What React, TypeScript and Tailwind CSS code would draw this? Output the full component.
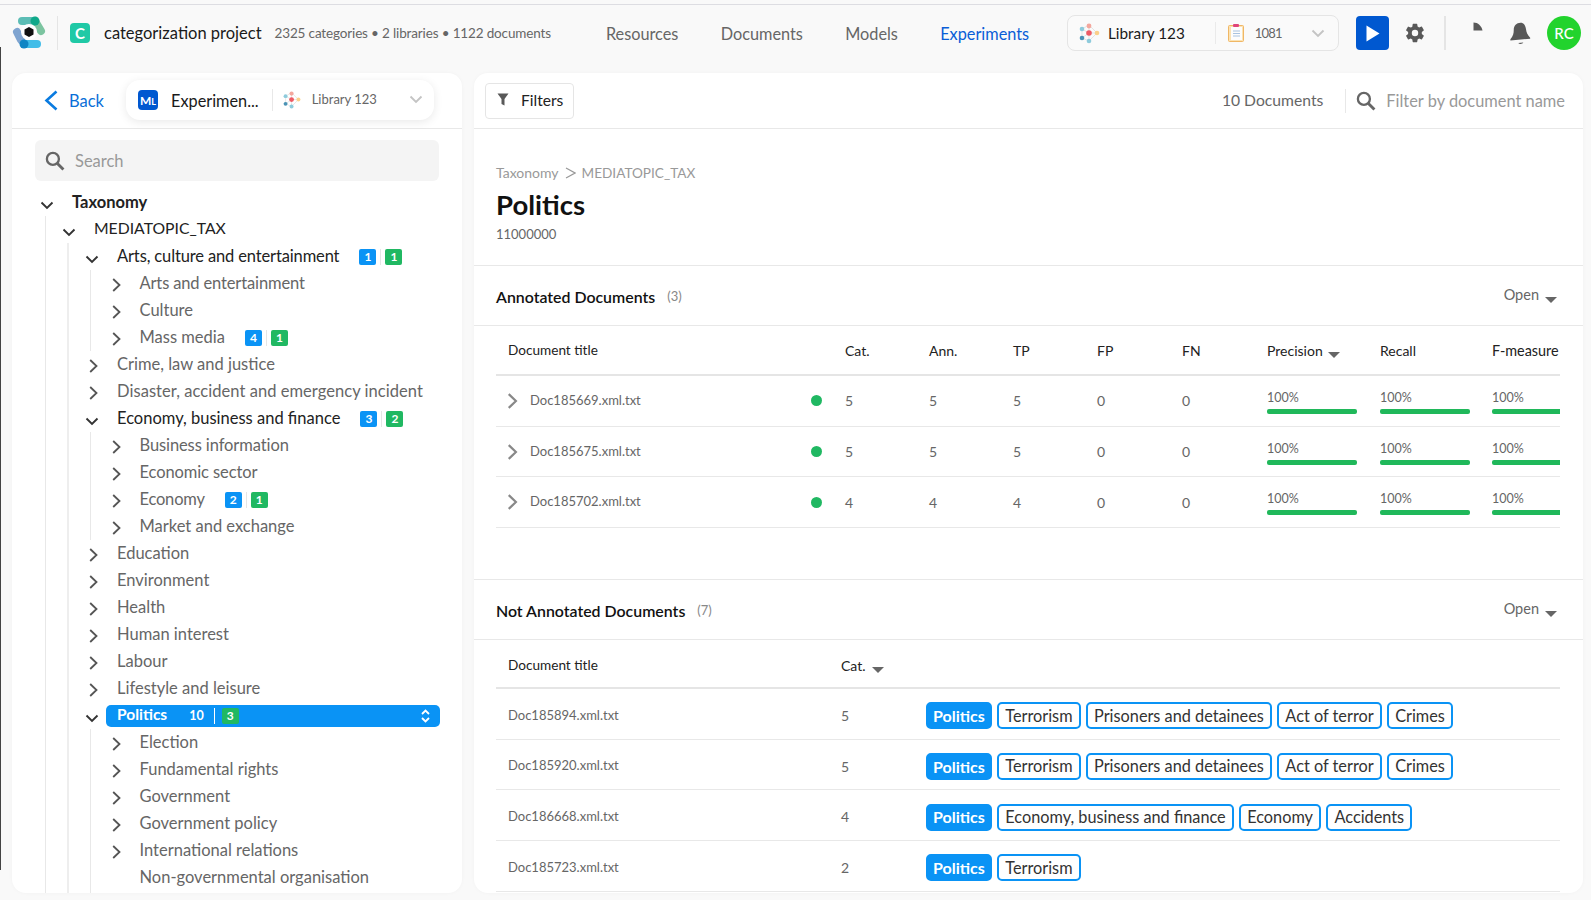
import React from "react";

const F = "font-['Lato','Liberation_Sans',sans-serif]";

function Network({ size = 21 }: { size?: number }) {
  return (
    <svg width={size} height={size} viewBox="0 0 21 21" className="shrink-0">
      <g stroke="#d8d8d8" strokeWidth="0.7" fill="none">
        <path d="M3 6 L10 2 L18 10 L10 18 L3 15 Z M3 6 L10 10 L3 15 M10 2 V18 M10 10 H18" />
      </g>
      <circle cx="10" cy="3" r="2.4" fill="#f4a79d" />
      <circle cx="3" cy="6" r="2.3" fill="#8ecbdc" />
      <circle cx="3" cy="15" r="2.3" fill="#4b93b5" />
      <circle cx="10" cy="18" r="2.3" fill="#8ecbdc" />
      <circle cx="18" cy="10" r="2.3" fill="#fbd08a" />
      <circle cx="10" cy="10" r="2.8" fill="#ee5a64" />
    </svg>
  );
}

function Logo() {
  return (
    <svg width="36" height="34" viewBox="0 0 36 34" className="shrink-0">
      <g fill="none" strokeLinecap="round" strokeWidth="8">
        <path d="M10 5 H22" stroke="#5cbdb5" />
        <path d="M23 5 L29 15" stroke="#7cc4a0" />
        <path d="M5 16 L9 24" stroke="#7fa4d0" />
        <path d="M12 28 H25" stroke="#42bde8" />
      </g>
      <circle cx="23" cy="5" r="4.5" fill="#0fa98a" />
      <circle cx="12" cy="28" r="4.5" fill="#0f85c4" />
      <circle cx="17" cy="16" r="8" fill="#fff" />
      <path d="M17 11 L21.5 13.5 V18.5 L17 21 L12.5 18.5 V13.5 Z" fill="#111" />
    </svg>
  );
}

const ChevDown = ({ c = "#333" }: { c?: string }) => (
  <svg width="14" height="9" viewBox="0 0 14 9" className="shrink-0">
    <path d="M1.5 1.5 L7 7 L12.5 1.5" fill="none" stroke={c} strokeWidth="1.9" />
  </svg>
);
const ChevRight = ({ c = "#555", w = 9, h = 14, sw = 1.8 }: { c?: string; w?: number; h?: number; sw?: number }) => (
  <svg width={w} height={h} viewBox="0 0 9 14" className="shrink-0">
    <path d="M1.2 1 L7.5 7 L1.2 13" fill="none" stroke={c} strokeWidth={sw} />
  </svg>
);
const Caret = () => (
  <span className="inline-block w-0 h-0 border-l-[6.5px] border-r-[6.5px] border-t-[6px] border-l-transparent border-r-transparent border-t-[#666]" />
);
const SearchIcon = () => (
  <svg width="20" height="20" viewBox="0 0 19 19" className="shrink-0">
    <circle cx="7.5" cy="7.5" r="5.7" fill="none" stroke="#666" strokeWidth="2.2" />
    <path d="M11.8 11.8 L17.5 17.5" stroke="#666" strokeWidth="2.8" />
  </svg>
);

type N = {
  t: string;
  open?: boolean;
  none?: boolean;
  strong?: boolean;
  cls?: string;
  badges?: [number, number];
  sel?: boolean;
  kids?: N[];
};

const tree: N = {
  t: "Taxonomy",
  open: true,
  strong: true,
  cls: "text-[16.5px]",
  kids: [
    {
      t: "MEDIATOPIC_TAX",
      open: true,
      cls: "text-[15.75px] -mt-[4px]",
      kids: [
        {
          t: "Arts, culture and entertainment",
          open: true,
          cls: "text-[16.5px] tracking-[-0.14px]",
          badges: [1, 1],
          kids: [
            { t: "Arts and entertainment", cls: "text-[16.5px] tracking-[-0.14px]" },
            { t: "Culture" },
            { t: "Mass media", badges: [4, 1] },
          ],
        },
        { t: "Crime, law and justice" },
        { t: "Disaster, accident and emergency incident", cls: "text-[16.5px] tracking-[0.05px]" },
        {
          t: "Economy, business and finance",
          open: true,
          badges: [3, 2],
          kids: [
            { t: "Business information", cls: "text-[16.5px] tracking-[-0.1px]" },
            { t: "Economic sector", cls: "text-[16.5px] tracking-[-0.1px]" },
            { t: "Economy", cls: "text-[16.5px] tracking-[-0.2px]", badges: [2, 1] },
            { t: "Market and exchange" },
          ],
        },
        { t: "Education" },
        { t: "Environment" },
        { t: "Health" },
        { t: "Human interest" },
        { t: "Labour" },
        { t: "Lifestyle and leisure" },
        {
          t: "Politics",
          open: true,
          sel: true,
          kids: [
            { t: "Election" },
            { t: "Fundamental rights" },
            { t: "Government" },
            { t: "Government policy" },
            { t: "International relations" },
            { t: "Non-governmental organisation", none: true },
          ],
        },
      ],
    },
  ],
};

function Badges({ b }: { b: [number, number] }) {
  return (
    <span className="flex items-center ml-[20px]">
      <span className="w-[17px] h-[16px] mt-[1px] rounded-[2px] bg-[#0a93f5] text-white text-[12px] font-bold flex items-center justify-center">
        {b[0]}
      </span>
      <span className="w-px h-[16px] mt-[1px] bg-[#e5e5e5] mx-[4px]" />
      <span className="w-[17px] h-[16px] mt-[1px] rounded-[2px] bg-[#20b862] text-white text-[12px] font-bold flex items-center justify-center">
        {b[1]}
      </span>
    </span>
  );
}

function Node({ n, depth }: { n: N; depth: number }) {
  const guide =
    depth === 0
      ? "ml-[5px] pl-[16px] border-l border-[#e8e8e8]"
      : depth === 1
        ? "ml-[5px] pl-[16px] border-l-2 border-[#eeeeee]"
        : "ml-[5px] pl-[16.5px] border-l border-[#e8e8e8]";
  return (
    <div>
      <div className="flex items-center h-[27px]">
        {n.sel ? (
          <>
            <span className="w-[21px] shrink-0 flex mt-[6px]">
              <ChevDown />
            </span>
            <div className="flex-1 h-[22px] mt-[1px] rounded-[5px] bg-[#0a93f5] pl-[11px] pr-[10px] flex items-center text-white">
              <span className="font-bold text-[15.5px] -mt-[2px]">Politics</span>
              <span className="ml-[22px] text-[12.5px] font-bold mt-[1px]">10</span>
              <span className="w-px h-[16px] bg-white ml-[10px] mr-[7px]" />
              <span className="w-[17px] h-[16px] rounded-[2px] bg-[#20b862] text-[12px] font-bold flex items-center justify-center">
                3
              </span>
              <svg width="9" height="14" viewBox="0 0 9 14" className="ml-auto">
                <path d="M1 5 L4.5 1.5 L8 5 M1 9 L4.5 12.5 L8 9" fill="none" stroke="#fff" strokeWidth="1.8" />
              </svg>
            </div>
          </>
        ) : (
          <>
            <span className={`w-[32px] shrink-0 flex ${n.open ? "mt-[6px]" : "mt-[2px] pl-[4px]"}`}>
              {n.none ? null : n.open ? <ChevDown /> : <ChevRight />}
            </span>
            <span
              className={`whitespace-nowrap ${n.strong ? "font-bold" : ""} ${n.open ? "text-[#222]" : "text-[#666]"} ${n.cls ?? "text-[16.5px]"}`}
            >
              {n.t}
            </span>
            {n.badges && <Badges b={n.badges} />}
          </>
        )}
      </div>
      {n.kids && (
        <div className={`${guide} ${n.sel ? "pb-[60px]" : ""}`}>
          {n.kids.map((k) => (
            <Node key={k.t} n={k} depth={depth + 1} />
          ))}
        </div>
      )}
    </div>
  );
}

const COLS = "grid grid-cols-[349px_84px_84px_84px_85px_85px_113px_112px_1fr]";

const annotated: [string, number][] = [
  ["Doc185669.xml.txt", 5],
  ["Doc185675.xml.txt", 5],
  ["Doc185702.xml.txt", 4],
];

const notAnnotated: [string, number, string[]][] = [
  ["Doc185894.xml.txt", 5, ["Terrorism", "Prisoners and detainees", "Act of terror", "Crimes"]],
  ["Doc185920.xml.txt", 5, ["Terrorism", "Prisoners and detainees", "Act of terror", "Crimes"]],
  ["Doc186668.xml.txt", 4, ["Economy, business and finance", "Economy", "Accidents"]],
  ["Doc185723.xml.txt", 2, ["Terrorism"]],
];

function Pct() {
  return (
    <div className="pt-[12px]">
      <div className="text-[12.5px] leading-[20px] text-[#666]">100%</div>
      <div className="h-[5px] w-[90px] rounded-[2px] bg-[#20b85a] mt-[1px]" />
    </div>
  );
}

function SectionHead({ title, count }: { title: string; count: number }) {
  return (
    <div className="h-[60px] shrink-0 border-b border-[#e8e8e8] flex items-center pl-[22px] pr-[26px] pt-[3px]">
      <span className="text-[15.9px] font-semibold text-[#111]">{title}</span>
      <span className="ml-[12px] text-[13px] text-[#888]">({count})</span>
      <span className="ml-auto text-[14.5px] text-[#666] -mt-[5px]">Open</span>
      <span className="ml-[6px]">
        <Caret />
      </span>
    </div>
  );
}

export default function App() {
  return (
    <div className={`${F} relative w-[1591px] h-[900px] overflow-hidden bg-[#f9f9f9] pt-[4px]`}>
      <div className="absolute left-0 top-[47px] h-[823px] w-px bg-[#444]" />
      {/* top bar */}
      <header className="h-[69px] border-t border-[#dddde2] flex items-center pl-[12px] pr-[10px] pb-[12px]">
        <Logo />
        <span className="w-px h-[34px] bg-[#e5e5e5] ml-[9px]" />
        <span className="ml-[12px] w-[20px] h-[20px] rounded-[4px] bg-[#20c9a6] text-white font-bold text-[15px] flex items-center justify-center">
          C
        </span>
        <span className="ml-[14px] text-[16.5px] text-[#1a1a1a] whitespace-nowrap">categorization project</span>
        <span className="ml-[13px] text-[13.5px] tracking-[-0.15px] text-[#666] whitespace-nowrap">
          2325 categories • 2 libraries • 1122 documents
        </span>
        <nav className="ml-[55px] flex items-center gap-[42.3px] text-[16.3px] text-[#666] mt-[3px]">
          <span>Resources</span>
          <span>Documents</span>
          <span>Models</span>
          <span className="text-[#0a5ed7]">Experiments</span>
        </nav>
        <div className="ml-auto mr-[-2px] h-[36px] w-[272px] border border-[#e5e5e5] rounded-[8px] flex items-center pl-[11px] pr-[13px] bg-[#fafafa]">
          <Network />
          <span className="ml-[8px] mt-[1px] text-[15.3px] text-[#1a1a1a] whitespace-nowrap">Library 123</span>
          <span className="w-px h-[22px] bg-[#eaeaea] ml-[30px]" />
          <svg width="16" height="18" viewBox="0 0 16 18" className="ml-[12px]">
            <rect x="0.5" y="1.5" width="15" height="16" rx="1" fill="#fbe3b5" stroke="#f0b765" />
            <rect x="3" y="3" width="11" height="13" fill="#fdfdfd" />
            <path d="M5 7 H12 M5 9.5 H12 M5 12 H12" stroke="#a9c3e0" />
            <rect x="5" y="0" width="6" height="3" rx="1" fill="#e0457a" />
          </svg>
          <span className="ml-[11px] mt-[2px] text-[13px] tracking-[-0.8px] text-[#666]">1081</span>
          <span className="ml-auto">
            <ChevDown c="#c4c4c4" />
          </span>
        </div>
        <span className="ml-[19px] w-[33px] h-[34px] rounded-[4px] bg-[#0058d0] flex items-center justify-center">
          <svg width="14" height="17" viewBox="0 0 14 17">
            <path d="M0.5 0.5 L13.5 8.5 L0.5 16.5 Z" fill="#fff" />
          </svg>
        </span>
        <svg width="22" height="22" viewBox="0 0 24 24" className="ml-[15px]">
          <path
            fill="#595959"
            d="M19.4 13c.04-.32.06-.66.06-1s-.02-.68-.07-1l2.1-1.65a.5.5 0 0 0 .12-.64l-2-3.46a.5.5 0 0 0-.6-.22l-2.49 1a7.3 7.3 0 0 0-1.7-1l-.37-2.65A.5.5 0 0 0 13.95 2h-4a.5.5 0 0 0-.49.42l-.38 2.65c-.6.25-1.17.59-1.69 1l-2.49-1a.5.5 0 0 0-.61.22l-2 3.46a.5.5 0 0 0 .12.64L4.52 11a7.9 7.9 0 0 0 0 2l-2.11 1.65a.5.5 0 0 0-.12.64l2 3.46c.12.22.38.3.61.22l2.49-1c.52.4 1.09.74 1.69 1l.38 2.65c.04.24.25.42.49.42h4c.25 0 .46-.18.49-.42l.38-2.65c.6-.26 1.17-.6 1.69-1l2.49 1c.23.08.49 0 .61-.22l2-3.46a.5.5 0 0 0-.12-.64L19.4 13ZM12 15.5a3.5 3.5 0 1 1 0-7 3.5 3.5 0 0 1 0 7Z"
          />
        </svg>
        <span className="ml-[18px] w-[2px] h-[34px] bg-[#e5e5e5]" />
        <svg width="10" height="10" viewBox="0 0 10 10" className="ml-[27px] -mt-[12px]">
          <path d="M0.5 0.5 C5 0.5 8.5 4 9.5 8.5 H0.5 Z" fill="#595959" />
        </svg>
        <svg width="27" height="27" viewBox="0 0 24 24" className="ml-[24px]">
          <path
            fill="#595959"
            d="M12 2.5c-3.6 0-6 2.6-6 6.2 0 3.5-.6 5.6-3 8.3v1.2l17.6-1.6v-.9c-2.6-2.4-3.3-4.5-3.7-7.4C16.4 4.8 15 2.5 12 2.5ZM10 20.5c1 1.3 3.5 1.2 4.5-.4Z"
          />
        </svg>
        <span className="ml-[13px] w-[34px] h-[34px] rounded-full bg-[#22d32d] text-white text-[15px] font-medium flex items-center justify-center">
          RC
        </span>
      </header>

      {/* body */}
      <div className="flex gap-[12px] pl-[12px] pr-[8px] h-[820px]">
        {/* left panel */}
        <aside className="w-[450px] shrink-0 rounded-[14px] bg-white overflow-hidden flex flex-col shadow-[0_0_4px_rgba(0,0,0,0.03)]">
          <div className="h-[56px] shrink-0 border-b border-[#e8e8e8] flex items-center pl-[32px]">
            <svg width="14" height="21" viewBox="0 0 14 21" className="shrink-0">
              <path d="M12.5 1.5 L2.5 10.5 L12.5 19.5" fill="none" stroke="#0a7be0" strokeWidth="2.6" />
            </svg>
            <span className="ml-[11px] mt-[1px] text-[16.5px] text-[#0a6fd8]">Back</span>
            <div className="ml-[22px] w-[308px] h-[40px] -mt-[2px] rounded-[14px] bg-white shadow-[0_2px_10px_rgba(0,0,0,0.09)] flex items-center pl-[12px] pr-[11px]">
              <span className="w-[20px] h-[20px] rounded-[4px] bg-[#0058d0] text-white text-[12px] font-bold flex items-baseline justify-center pt-[2px]">
                M<span className="text-[9px]">L</span>
              </span>
              <span className="ml-[13px] mt-[3px] text-[16.3px] text-[#1a1a1a] whitespace-nowrap">Experimen...</span>
              <span className="w-px h-[22px] bg-[#e8e8e8] ml-[13px]" />
              <span className="ml-[10px]">
                <Network size={18} />
              </span>
              <span className="ml-[11px] text-[13px] text-[#666] whitespace-nowrap">Library 123</span>
              <span className="ml-auto">
                <ChevDown c="#c4c4c4" />
              </span>
            </div>
          </div>
          <div className="mt-[11px] mx-[23px] h-[41px] shrink-0 rounded-[6px] bg-[#f4f4f4] flex items-center pl-[10px]">
            <SearchIcon />
            <span className="ml-[10px] mt-[2px] text-[16.5px] text-[#999]">Search</span>
          </div>
          <div className="mt-[8px] pl-[28px] pr-[22px] flex-1 overflow-hidden">
            <Node n={tree} depth={0} />
          </div>
        </aside>

        {/* right panel */}
        <main className="flex-1 rounded-[14px] bg-white overflow-hidden flex flex-col shadow-[0_0_4px_rgba(0,0,0,0.03)]">
          <div className="h-[56px] shrink-0 border-b border-[#e8e8e8] flex items-center pl-[11px] pr-[18px]">
            <div className="h-[36px] w-[89px] border border-[#e5e5e5] rounded-[4px] flex items-center pl-[11px]">
              <svg width="12" height="13" viewBox="0 0 12 13" className="-mt-[2px]">
                <path d="M0.5 0.5 H11.5 L7.5 6 V12.5 L4.5 11 V6 Z" fill="#595959" />
              </svg>
              <span className="ml-[12px] mt-[1px] text-[15.6px] text-[#222]">Filters</span>
            </div>
            <span className="ml-auto mt-[1px] text-[15.7px] text-[#666]">10 Documents</span>
            <span className="w-px h-[24px] bg-[#e8e8e8] ml-[22px]" />
            <span className="ml-[10px]">
              <SearchIcon />
            </span>
            <span className="ml-[10px] mt-[1px] text-[16.4px] text-[#999]">Filter by document name</span>
          </div>

          <div className="h-[137px] shrink-0 border-b border-[#e8e8e8] pl-[22px] pt-[34px]">
            <div className="flex items-center text-[14px] text-[#999] leading-[20px]">
              <span>Taxonomy</span>
              <svg width="11" height="12" viewBox="0 0 11 12" className="mx-[6px]">
                <path d="M1 1 L10 6 L1 11" fill="none" stroke="#999" strokeWidth="1.2" />
              </svg>
              <span className="text-[13.6px]">MEDIATOPIC_TAX</span>
            </div>
            <h1 className="text-[27.5px] font-bold text-[#111] leading-[34px] mt-[5px]">Politics</h1>
            <div className="text-[13px] text-[#666] leading-[18px] mt-[3px]">11000000</div>
          </div>

          <SectionHead title="Annotated Documents" count={3} />
          <div className="ml-[22px] mr-[23px] shrink-0 overflow-hidden">
            <div className={`${COLS} h-[50px] border-b-2 border-[#e5e5e5] items-center text-[14px] text-[#222]`}>
              <span className="pl-[12px] mt-[1px] text-[13.6px]">Document title</span>
              <span>Cat.</span>
              <span>Ann.</span>
              <span>TP</span>
              <span>FP</span>
              <span>FN</span>
              <span className="flex items-center">
                Precision
                <span className="ml-[5px] mt-[4px]">
                  <Caret />
                </span>
              </span>
              <span>Recall</span>
              <span className="mt-[1px] text-[14.4px]">F-measure</span>
            </div>
            {annotated.map(([d, c]) => (
              <div key={d} className={`${COLS} h-[50.7px] border-b border-[#e8e8e8] text-[14px] text-[#666]`}>
                <div className="flex items-center pl-[11px] pr-[23px]">
                  <ChevRight c="#888" w={11} h={16} sw={1.9} />
                  <span className="ml-[12px] text-[13px]">{d}</span>
                  <span className="ml-auto w-[11px] h-[11px] rounded-full bg-[#20b862]" />
                </div>
                <span className="self-center">{c}</span>
                <span className="self-center">{c}</span>
                <span className="self-center">{c}</span>
                <span className="self-center">0</span>
                <span className="self-center">0</span>
                <Pct />
                <Pct />
                <Pct />
              </div>
            ))}
          </div>

          <div className="mt-[51px] shrink-0 border-t border-[#e8e8e8]" />
          <SectionHead title="Not Annotated Documents" count={7} />
          <div className="ml-[22px] mr-[23px] overflow-hidden">
            <div className="grid grid-cols-[345px_1fr] h-[49px] pt-[3px] border-b-2 border-[#e5e5e5] items-center text-[14px] text-[#222]">
              <span className="pl-[12px] text-[13.6px]">Document title</span>
              <span className="flex items-center">
                Cat.
                <span className="ml-[6px] mt-[4px]">
                  <Caret />
                </span>
              </span>
            </div>
            {notAnnotated.map(([d, c, tags]) => (
              <div key={d} className="grid grid-cols-[345px_84px_1fr] h-[50.7px] pt-[3px] border-b border-[#e8e8e8] items-center text-[14px] text-[#666]">
                <span className="pl-[12px] text-[13px]">{d}</span>
                <span>{c}</span>
                <div className="flex gap-[5.5px] mt-[1px] ml-[1px]">
                  <span className="h-[27px] px-[5px] rounded-[5px] bg-[#0a93f5] border-2 border-[#0a93f5] text-white text-[16px] font-bold flex items-center">
                    Politics
                  </span>
                  {tags.map((t) => (
                    <span key={t} className="h-[27px] px-[6px] rounded-[5px] border-2 border-[#0a93f5] text-[#333] text-[16.3px] flex items-center whitespace-nowrap">
                      {t}
                    </span>
                  ))}
                </div>
              </div>
            ))}
          </div>
        </main>
      </div>
    </div>
  );
}
